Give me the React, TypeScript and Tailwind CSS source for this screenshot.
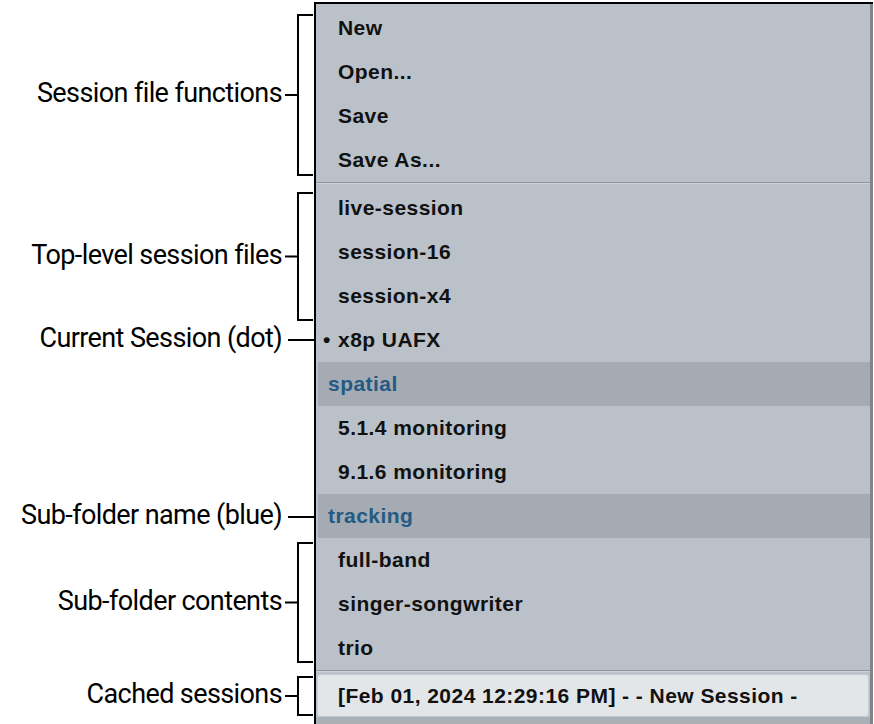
import React from "react";

type Note = { label: string; gap: number; height: number; kind: "bracket" | "line" };

const notes: Note[] = [
  { label: "Session file functions", gap: 14, height: 162, kind: "bracket" },
  { label: "Top-level session files", gap: 16, height: 129, kind: "bracket" },
  { label: "Current Session (dot)", gap: 7, height: 24, kind: "line" },
  { label: "Sub-folder name (blue)", gap: 153, height: 24, kind: "line" },
  { label: "Sub-folder contents", gap: 13, height: 121, kind: "bracket" },
  { label: "Cached sessions", gap: 13, height: 40, kind: "bracket" },
];

function Bracket({ height, kind }: { height: number; kind: Note["kind"] }) {
  const mid = height / 2;
  if (kind === "line") {
    return (
      <svg width={30} height={height} className="shrink-0">
        <line x1={4} y1={mid} x2={30} y2={mid} stroke="#000" strokeWidth={2} />
      </svg>
    );
  }
  return (
    <svg width={30} height={height} className="shrink-0">
      <path
        d={`M29 1 H14 V${height - 1} H29 M1 ${mid} H14`}
        fill="none"
        stroke="#000"
        strokeWidth={2}
      />
    </svg>
  );
}

function Annotation({ note }: { note: Note }) {
  return (
    <div className="flex items-center" style={{ marginTop: note.gap, height: note.height }}>
      <div className="flex-1 pb-[3px] pr-[2px] text-right text-[27px] leading-none tracking-[-0.6px] text-black">
        {note.label}
      </div>
      <Bracket height={note.height} kind={note.kind} />
    </div>
  );
}

function Item({ label, current }: { label: string; current?: boolean }) {
  return (
    <div className="flex h-[44px] items-center">
      <span className="flex w-[22px] justify-center">{current ? "•" : ""}</span>
      <span>{label}</span>
    </div>
  );
}

function Folder({ label }: { label: string }) {
  return (
    <div className="ml-[2px] flex h-[44px] items-center bg-[#a4abb2] pl-[10px] text-[#245a83]">
      {label}
    </div>
  );
}

function Separator() {
  return (
    <div className="h-[4px]">
      <div className="h-px bg-[#8f969b]" />
      <div className="h-px bg-[#cdd2d6]" />
    </div>
  );
}

export default function App(): React.ReactElement {
  return (
    <div className="flex h-[724px] w-[874px] overflow-hidden bg-white font-['Roboto',sans-serif]">
      <div className="flex w-[314px] flex-col">
        {notes.map((n) => (
          <Annotation key={n.label} note={n} />
        ))}
      </div>
      <div className="mt-[2px] flex w-[559px] flex-col border-l-2 border-t-2 border-black bg-[#bac1c8] pr-[3px] font-['Liberation_Sans',Arial,sans-serif] text-[21px] font-bold tracking-[0.45px] text-[#111] shadow-[inset_-3px_0_0_#7f858b]">
        <div className="pt-[2px]">
          <Item label="New" />
          <Item label="Open..." />
          <Item label="Save" />
          <Item label="Save As..." />
        </div>
        <Separator />
        <Item label="live-session" />
        <Item label="session-16" />
        <Item label="session-x4" />
        <Item label="x8p UAFX" current />
        <Folder label="spatial" />
        <Item label="5.1.4 monitoring" />
        <Item label="9.1.6 monitoring" />
        <Folder label="tracking" />
        <Item label="full-band" />
        <Item label="singer-songwriter" />
        <Item label="trio" />
        <Separator />
        <div className="ml-px mr-px flex h-[43px] items-center rounded-[3px] border border-[#c4cacf] bg-[#e2e6e9] pl-[20px]">
          [Feb 01, 2024 12:29:16 PM] - - New Session -
        </div>
        <div className="flex-1 bg-[#a9b0b6]" />
      </div>
    </div>
  );
}
